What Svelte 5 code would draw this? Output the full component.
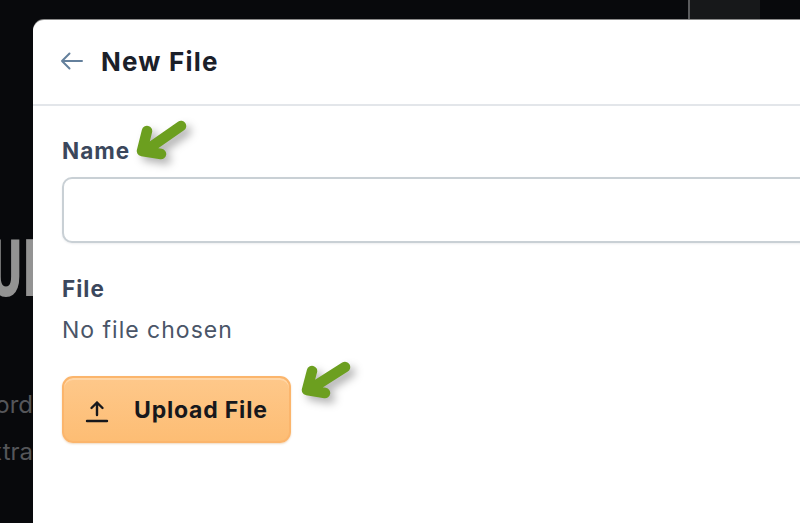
<script>
	let name = "";
</script>

<main class="page">
	<div class="backdrop">
		<div class="top-panel"></div>
		<div class="big">UI</div>
		<div class="line one">Word</div>
		<div class="line two">Extra</div>
	</div>

	<section class="modal">
		<header class="modal-header">
			<svg class="back" viewBox="0 0 24 24" width="24" height="24" fill="none" stroke="#64809c" stroke-width="2" stroke-linecap="round" stroke-linejoin="round">
				<path d="M22 12H2M9.500 4.500L2 12L9.500 19.500" />
			</svg>
			<h1>New File</h1>
		</header>
		<form class="modal-body">
			<label for="file-name">Name</label>
			<input id="file-name" type="text" bind:value={name} />
			<div class="file-label">File</div>
			<div class="file-state">No file chosen</div>
			<button type="button" class="upload">
				<svg viewBox="0 0 24 24" width="24" height="24" fill="none" stroke="#17181c" stroke-width="2.400" stroke-linecap="round" stroke-linejoin="round">
					<path d="M12 16V3.500M6.500 9L12 3.500L17.500 9M2 22H22" />
				</svg>
				<span>Upload File</span>
			</button>
		</form>
	</section>

	<svg class="arrow arrow-name" viewBox="0 0 60 46" width="60" height="46">
		<path d="M47 5L14 28M13 10L8 30L27 33" />
	</svg>
	<svg class="arrow arrow-upload" viewBox="0 0 60 46" width="60" height="46">
		<path d="M46 6L13 27M13 10L8 29L26 32" />
	</svg>
</main>

<style>
	:global(body) {
		margin: 0;
		background: #08090c;
	}
	.page {
		position: relative;
		width: 800px;
		height: 523px;
		overflow: hidden;
		background: #08090c;
		font-family: "Inter", "Open Sans", sans-serif;
	}
	.backdrop {
		position: absolute;
		inset: 0;
	}
	.top-panel {
		position: absolute;
		left: 688px;
		top: 0;
		width: 72px;
		height: 20px;
		background: #17181a;
		border-left: 2px solid #5a5b5d;
		box-sizing: border-box;
	}
	.big {
		position: absolute;
		left: -10px;
		top: 229px;
		font: 900 80px/1 "Roboto", sans-serif;
		color: #939393;
		transform: scaleX(0.6);
		transform-origin: left;
		letter-spacing: 2px;
	}
	.line {
		position: absolute;
		font-size: 24px;
		line-height: 30px;
		color: #55565a;
		white-space: nowrap;
	}
	.one {
		right: 767px;
		top: 390px;
	}
	.two {
		right: 767px;
		top: 437px;
	}
	.modal {
		position: relative;
		margin-left: 33px;
		top: 20px;
		width: 820px;
		height: 560px;
		background: #fff;
		border-radius: 11px;
		box-shadow: 0 -1px 0 #8a8a8a;
	}
	.modal-header {
		display: flex;
		align-items: center;
		gap: 17px;
		height: 86px;
		padding: 0 0 2px 27px;
		border-bottom: 2px solid #e3e6ea;
		box-sizing: border-box;
	}
	h1 {
		margin: 0;
		font-size: 26px;
		font-weight: 700;
		letter-spacing: 1.200px;
		color: #1b2029;
	}
	.modal-body {
		display: flex;
		flex-direction: column;
		align-items: flex-start;
		padding: 30px 0 0 29px;
	}
	label,
	.file-label {
		font-size: 22.500px;
		line-height: 30px;
		font-weight: 700;
		letter-spacing: 1px;
		color: #3b475c;
	}
	input {
		width: 800px;
		height: 66px;
		margin-top: 11px;
		border: 2px solid #c9d0d5;
		border-radius: 10px;
		background: #fff;
		box-sizing: border-box;
		box-shadow: 0 1px 2px rgba(30, 40, 60, 0.08);
		outline: none;
	}
	.file-label {
		margin-top: 31px;
	}
	.file-state {
		margin-top: 11px;
		font-size: 23px;
		line-height: 30px;
		letter-spacing: 1px;
		color: #4a5568;
	}
	.upload {
		display: flex;
		align-items: center;
		gap: 25px;
		width: 229px;
		height: 67px;
		margin-top: 31px;
		padding: 2px 0 0 21px;
		background: linear-gradient(#fec88a, #fdbd74);
		border: 2px solid #fbb56c;
		border-radius: 11px;
		box-sizing: border-box;
		box-shadow: inset 0 2px 0 #ffd6a6, 0 1px 2px rgba(200, 130, 50, 0.3);
		font: 700 23px/1 "Inter", "Open Sans", sans-serif;
		letter-spacing: 0.800px;
		color: #17181c;
	}
	.arrow {
		position: absolute;
		fill: none;
		stroke: #6c9f1f;
		stroke-width: 10.500;
		stroke-linecap: round;
		stroke-linejoin: round;
		filter: drop-shadow(5px 5px 4px rgba(0, 0, 0, 0.3));
		overflow: visible;
	}
	.arrow-name {
		left: 134px;
		top: 121px;
	}
	.arrow-upload {
		left: 299px;
		top: 361px;
	}
</style>
